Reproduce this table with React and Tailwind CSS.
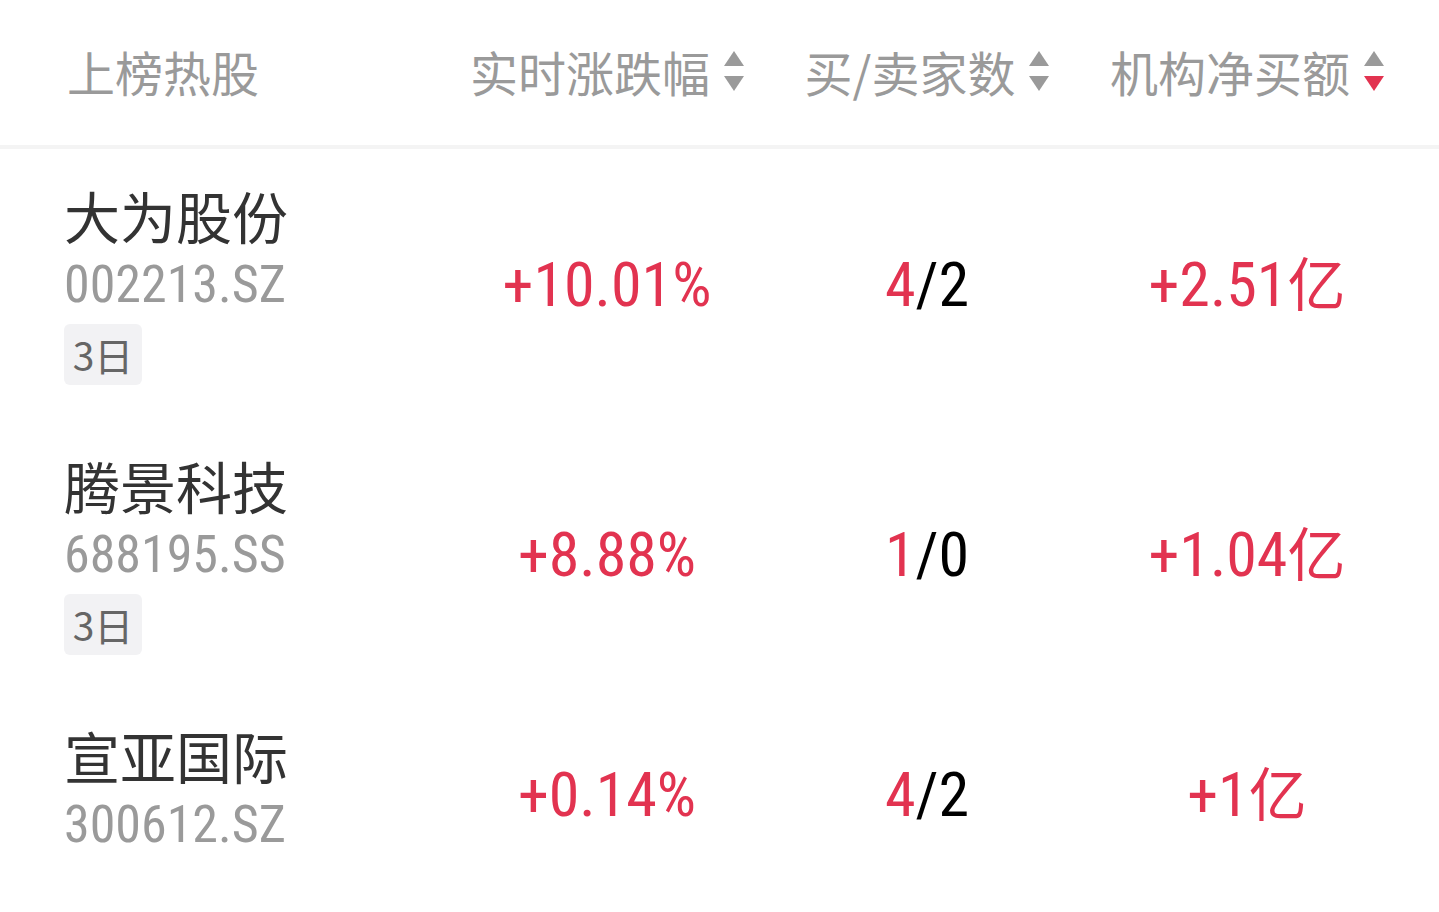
const rows = [
  { name: '大为股份', code: '002213.SZ', tag: '3日', pct: '+10.01%', buy: '4', sell: '2', net: '+2.51亿' },
  { name: '腾景科技', code: '688195.SS', tag: '3日', pct: '+8.88%', buy: '1', sell: '0', net: '+1.04亿' },
  { name: '宣亚国际', code: '300612.SZ', tag: null, pct: '+0.14%', buy: '4', sell: '2', net: '+1亿' },
]

const cjk = "font-['Noto_Sans_CJK_SC',sans-serif]"
const num = "font-['Roboto_Condensed','Noto_Sans_CJK_SC',sans-serif]"

function SortArrows({ active }) {
  return (
    <svg width="20" height="40" viewBox="0 0 20 40" className="shrink-0">
      <path d="M10 0 L20 15 L0 15 Z" fill="#9a9a9a" />
      <path d="M0 25 L20 25 L10 40 Z" fill={active ? '#e23350' : '#9a9a9a'} />
    </svg>
  )
}

function HeadCell({ label, active }) {
  return (
    <div className="flex items-center justify-center gap-[14px]">
      <span>{label}</span>
      <SortArrows active={active} />
    </div>
  )
}

export default function App() {
  return (
    <div className={`w-[1439px] h-[912px] overflow-hidden bg-white ${cjk}`}>
      <div className="grid grid-cols-[383px_320px_320px_320px] items-center pl-16 pb-[3px] h-[149px] border-b-4 border-[#f4f4f4] text-[48px] text-[#9a9a9a]">
        <span className="pl-[3px]">上榜热股</span>
        <HeadCell label="实时涨跌幅" />
        <HeadCell label="买/卖家数" />
        <HeadCell label="机构净买额" active />
      </div>

      {rows.map((r) => (
        <div key={r.code} className="grid grid-cols-[383px_320px_320px_320px] items-center pl-16 pt-[33px] pb-[34px]">
          <div className="flex flex-col items-start">
            <span className="text-[56px] leading-[66px] text-[#333]">{r.name}</span>
            <span className={`${num} mt-[4px] text-[52px] leading-[66px] text-[#9a9a9a]`}>{r.code}</span>
            {r.tag && (
              <span className="mt-[6px] h-[61px] w-[78px] flex items-center justify-center rounded-md bg-[#f2f2f4] text-[39px] text-[#666]">
                {r.tag}
              </span>
            )}
          </div>
          <div className={`${num} text-center text-[62px] text-[#e23350] ${r.tag ? 'pt-[2px]' : 'pt-[8px]'}`}>{r.pct}</div>
          <div className={`${num} text-center text-[62px] ${r.tag ? 'pt-[2px]' : 'pt-[8px]'}`}>
            <span className="text-[#e23350]">{r.buy}</span>
            <span className="text-black">/{r.sell}</span>
          </div>
          <div className={`${num} text-center text-[62px] text-[#e23350] ${r.tag ? 'pt-[2px]' : 'pt-[8px]'}`}>
            {r.net.slice(0, -1)}
            <span className="text-[58px]">{r.net.slice(-1)}</span>
          </div>
        </div>
      ))}
    </div>
  )
}
